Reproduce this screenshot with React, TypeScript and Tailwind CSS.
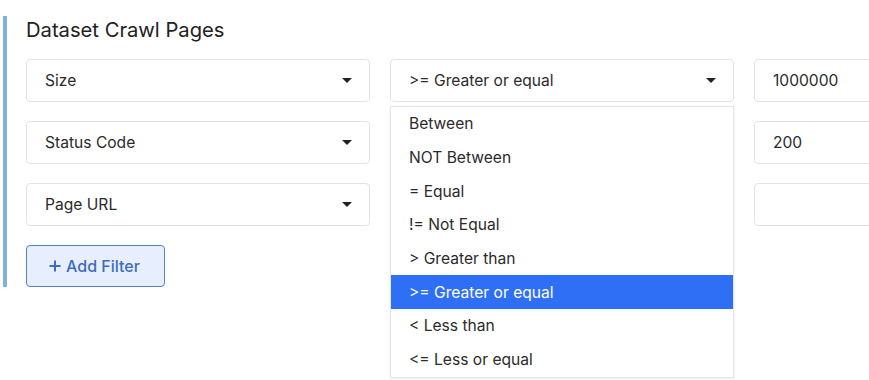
import React from "react";

const operators = [
  "Between",
  "NOT Between",
  "= Equal",
  "!= Not Equal",
  "> Greater than",
  ">= Greater or equal",
  "< Less than",
  "<= Less or equal",
];

function Caret() {
  return (
    <svg width="10" height="5" viewBox="0 0 10 5" className="shrink-0">
      <path d="M0 0 L10 0 L5 5 Z" fill="#222" />
    </svg>
  );
}

function SelectBox({ label }: { label: string }) {
  return (
    <div className="flex h-[43px] items-center justify-between rounded-[4px] border border-[#e3e3e3] bg-white pl-[18px] pr-[17px] text-[15.6px] text-[#2b2b2b]">
      <span>{label}</span>
      <Caret />
    </div>
  );
}

function ValueBox({ value }: { value: string }) {
  return (
    <div className="flex h-[43px] items-center rounded-[4px] border border-[#e3e3e3] bg-white pl-[18px] text-[15.6px] text-[#2b2b2b]">
      {value}
    </div>
  );
}

export default function App() {
  const rows = [
    { field: "Size", op: ">= Greater or equal", value: "1000000" },
    { field: "Status Code", op: "", value: "200" },
    { field: "Page URL", op: "", value: "" },
  ];

  return (
    <div className="h-[380px] w-[869px] overflow-hidden bg-white pt-4 pl-[3px] font-['Inter',sans-serif]">
      <div className="border-l-4 border-[#7fb3dc] pl-[19px]">
        <h2 className="mb-[16px] h-[27px] text-[20.2px] leading-[27px] text-[#222]">Dataset Crawl Pages</h2>
        <div className="relative flex flex-col gap-[19px]">
          {rows.map((r, i) => (
            <div key={i} className="grid w-[1097px] grid-cols-[344px_344px_344px] gap-x-[20px]">
              <SelectBox label={r.field} />
              <SelectBox label={r.op} />
              <ValueBox value={r.value} />
            </div>
          ))}
          <div className="absolute left-[364px] top-[47px] z-10 w-[344px] border border-[#e6e6e6] bg-white shadow-[0_1px_3px_rgba(0,0,0,0.08)]">
            {operators.map((op) => (
              <div
                key={op}
                className={
                  op === ">= Greater or equal"
                    ? "flex h-[33.7px] items-center bg-[#2f6ff5] pl-[18px] text-[15.6px] text-white"
                    : "flex h-[33.7px] items-center pl-[18px] text-[15.6px] text-[#2b2b2b]"
                }
              >
                {op}
              </div>
            ))}
          </div>
          <div>
            <button className="flex h-[42px] w-[139px] items-center justify-center gap-[5px] rounded-[4px] border border-[#5a7fc0] bg-[#e7efff] pr-[2px] text-[16px] font-medium text-[#3d6ac2]">
              <svg width="12" height="12" viewBox="0 0 12 12">
                <path d="M6 0.5 V11.5 M0.5 6 H11.5" stroke="#3d6ac2" strokeWidth="2" />
              </svg>
              Add Filter
            </button>
          </div>
        </div>
      </div>
    </div>
  );
}
